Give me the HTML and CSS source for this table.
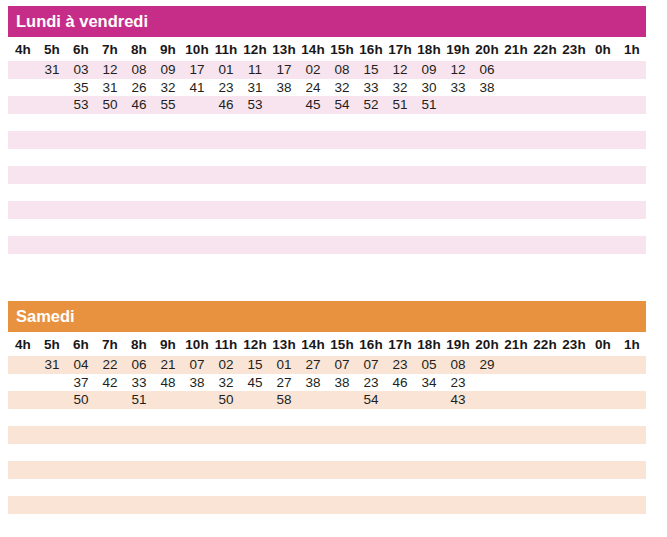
FILE: index.html
```html
<!DOCTYPE html>
<html lang="fr">
<head>
<meta charset="utf-8">
<title>Horaires</title>
<link rel="stylesheet" href="styles.css">
</head>
<body>
<div class="page">
  <section class="sched pink">
    <h2 class="bar">Lundi à vendredi</h2>
    <div class="hours">
      <span>4h</span><span>5h</span><span>6h</span><span>7h</span><span>8h</span><span>9h</span><span>10h</span><span>11h</span><span>12h</span><span>13h</span><span>14h</span><span>15h</span><span>16h</span><span>17h</span><span>18h</span><span>19h</span><span>20h</span><span>21h</span><span>22h</span><span>23h</span><span>0h</span><span>1h</span>
    </div>
    <div class="rows">
      <div class="row"><span></span><span>31</span><span>03</span><span>12</span><span>08</span><span>09</span><span>17</span><span>01</span><span>11</span><span>17</span><span>02</span><span>08</span><span>15</span><span>12</span><span>09</span><span>12</span><span>06</span></div>
      <div class="row"><span></span><span></span><span>35</span><span>31</span><span>26</span><span>32</span><span>41</span><span>23</span><span>31</span><span>38</span><span>24</span><span>32</span><span>33</span><span>32</span><span>30</span><span>33</span><span>38</span></div>
      <div class="row"><span></span><span></span><span>53</span><span>50</span><span>46</span><span>55</span><span></span><span>46</span><span>53</span><span></span><span>45</span><span>54</span><span>52</span><span>51</span><span>51</span></div>
      <div class="row"></div>
      <div class="row"></div>
      <div class="row"></div>
      <div class="row"></div>
      <div class="row"></div>
      <div class="row"></div>
      <div class="row"></div>
      <div class="row"></div>
      <div class="row"></div>
    </div>
  </section>
  <section class="sched orange">
    <h2 class="bar">Samedi</h2>
    <div class="hours">
      <span>4h</span><span>5h</span><span>6h</span><span>7h</span><span>8h</span><span>9h</span><span>10h</span><span>11h</span><span>12h</span><span>13h</span><span>14h</span><span>15h</span><span>16h</span><span>17h</span><span>18h</span><span>19h</span><span>20h</span><span>21h</span><span>22h</span><span>23h</span><span>0h</span><span>1h</span>
    </div>
    <div class="rows">
      <div class="row"><span></span><span>31</span><span>04</span><span>22</span><span>06</span><span>21</span><span>07</span><span>02</span><span>15</span><span>01</span><span>27</span><span>07</span><span>07</span><span>23</span><span>05</span><span>08</span><span>29</span></div>
      <div class="row"><span></span><span></span><span>37</span><span>42</span><span>33</span><span>48</span><span>38</span><span>32</span><span>45</span><span>27</span><span>38</span><span>38</span><span>23</span><span>46</span><span>34</span><span>23</span></div>
      <div class="row"><span></span><span></span><span>50</span><span></span><span>51</span><span></span><span></span><span>50</span><span></span><span>58</span><span></span><span></span><span>54</span><span></span><span></span><span>43</span></div>
      <div class="row"></div>
      <div class="row"></div>
      <div class="row"></div>
      <div class="row"></div>
      <div class="row"></div>
      <div class="row"></div>
      <div class="row"></div>
    </div>
  </section>
</div>
</body>
</html>
```

FILE: styles.css
```css
html, body {
  margin: 0;
  padding: 0;
  background: #ffffff;
}

body {
  font-family: "Liberation Sans", Arial, sans-serif;
  color: #231f20;
}

.page {
  padding: 6px 0 0 8px;
  width: 638px;
}

.sched {
  display: flex;
  flex-direction: column;
}

.sched + .sched {
  margin-top: 30px;
}

.bar {
  margin: 0;
  height: 31px;
  line-height: 31px;
  padding-left: 8px;
  font-size: 16.5px;
  font-weight: bold;
  color: #ffffff;
}

.pink .bar { background: #c62d88; }
.orange .bar { background: #e8913e; }

.hours,
.row {
  display: grid;
  grid-template-columns: repeat(22, 29px);
  text-align: center;
}

.hours {
  height: 24px;
  padding-top: 2px;
  box-sizing: border-box;
  line-height: 22px;
  font-size: 13.5px;
  font-weight: bold;
  color: #1a1718;
}

.row {
  height: 17.5px;
  line-height: 17.5px;
  font-size: 13.5px;
}

.hours span,
.row span {
  padding-left: 1px;
}

.pink .row:nth-child(odd) { background: #f7e4ef; }
.orange .row:nth-child(odd) { background: #f9e4d6; }
```
